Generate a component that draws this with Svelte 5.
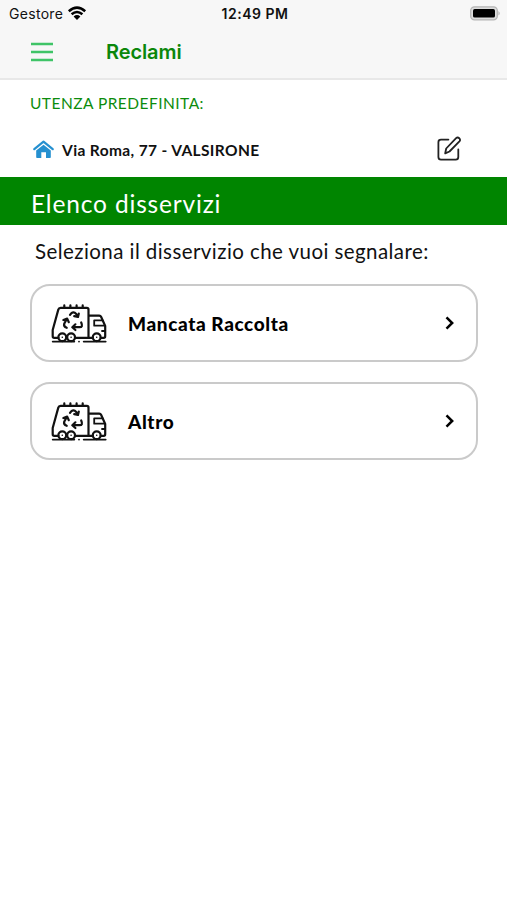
<script>
    const services = [
        { id: 1, label: 'Mancata Raccolta' },
        { id: 2, label: 'Altro' }
    ];
</script>

<div class="page">
    <header>
        <div class="status">
            <div class="carrier">
                <span>Gestore</span>
                <svg width="20" height="15" viewBox="0 0 20 15">
                    <path d="M1.8 5.2Q10-2 18.2 5.2M4.6 8.3Q10 3.6 15.4 8.3" fill="none" stroke="#000" stroke-width="2.5" />
                    <path d="M6.6 10.5Q10 7.6 13.4 10.5L10 14Z" />
                </svg>
            </div>
            <span class="time">12:49 PM</span>
            <svg class="battery" width="31" height="15" viewBox="0 0 31 15">
                <rect x="0.7" y="0.8" width="26.6" height="13" rx="3.8" fill="#ddd" stroke="#b5b5b5" stroke-width="1.3" />
                <rect x="3" y="3" width="22" height="8.6" rx="1.7" />
                <path d="M28.5 5Q30.8 7.3 28.5 9.6Z" fill="#aaa" />
            </svg>
        </div>
        <div class="nav">
            <svg class="menu" width="22" height="20" viewBox="0 0 22 20">
                <path d="M0 2H22M0 10H22M0 18H22" stroke="#3fc467" stroke-width="2.4" />
            </svg>
            <span class="title">Reclami</span>
        </div>
    </header>

    <div class="user-label"><span>UTENZA PREDEFINITA:</span></div>
    <div class="address">
        <svg width="21" height="19" viewBox="0 0 21 19">
            <path d="M1.3 9.2L10.5 1.7L19.7 9.2" fill="none" stroke="#2590d0" stroke-width="2.2" stroke-linecap="round" stroke-linejoin="round" />
            <path d="M3.2 10.6L10.5 4.8L17.8 10.6V17.3Q17.8 18 17 18H13V12.3H8.3V18H4Q3.2 18 3.2 17.3Z" fill="#2590d0" />
        </svg>
        <span class="street">Via Roma, 77 - VALSIRONE</span>
        <svg class="edit" width="26" height="26" viewBox="0 0 26 26" fill="none" stroke="#222" stroke-width="1.8" stroke-linecap="round" stroke-linejoin="round">
            <path d="M12.4 3.6H5Q2.4 3.6 2.4 6.2V21Q2.4 23.7 5 23.7H19.7Q22.3 23.7 22.3 21V13.4" />
            <path d="M9.2 17.3L10.2 12.5L20.1 2.2Q21.6.8 23.2 2.2Q24.8 3.8 23.4 5.4L13.5 15.5Z" />
        </svg>
    </div>

    <div class="banner"><span>Elenco disservizi</span></div>
    <div class="hint"><span>Seleziona il disservizio che vuoi segnalare:</span></div>

    <div class="list">
        {#each services as service (service.id)}
            <div class="card">
                <svg class="truck" width="56" height="41" viewBox="0 0 56 41" fill="none" stroke="#111" stroke-width="2.2" stroke-linecap="round" stroke-linejoin="round">
                    <path d="M7.4 34.8H3.2Q1.7 34.8 1.7 33.3V27L7.3 6.6Q7.8 4.8 9.6 4.8H35.8Q37.5 4.8 37.5 6.5V34.8M24 34.8H41.7M37.5 12.7H48.2Q49.6 12.7 50.2 14L54.2 23V33.3Q54.2 34.8 52.7 34.8H49.8" />
                    <path d="M13.3 4.5V2.4M19.4 4.5V2.4M25.6 4.5V2.4M31.7 4.5V2.4" />
                    <path d="M51.7 17.3H43.2V22.7H53.8M54 28H51" stroke-width="1.8" />
                    <circle cx="11.3" cy="34.3" r="3.9" />
                    <circle cx="20.1" cy="34.3" r="3.9" />
                    <circle cx="45.7" cy="34.3" r="3.9" />
                    <path d="M11.3 34.3h.01M20.1 34.3h.01M45.7 34.3h.01" stroke-width="1.6" />
                    <path d="M1.7 38.6H23.3M28 38.6h.01M32.7 38.6H54.7" stroke-width="1.8" />
                    <path d="M19 11.8Q22.2 7.3 25.2 11L26.7 13.6M27.8 10.6L27 14L23.2 13.2M15.7 24.8Q12.4 23.7 13.2 20.8L15.8 16M12.4 17L16.2 15.6L17.8 19.2M30.2 19.5Q32.4 24.2 28.5 24.2H21.5M24.4 21.3L21.3 24.2L24.4 27" />
                </svg>
                <span class="label">{service.label}</span>
                <svg class="chevron" width="10" height="14" viewBox="0 0 10 14">
                    <path d="M1.5 1.3L7.2 7L1.5 12.7" fill="none" stroke="#000" stroke-width="2.5" />
                </svg>
            </div>
        {/each}
    </div>
</div>

<style>
    :global(body) {
        background: #fff;
    }

    .page {
        min-height: 900px;
        font-family: 'Lato', sans-serif;
        color: #111;
        white-space: nowrap;
    }

    svg {
        display: block;
        flex: none;
    }

    header {
        box-sizing: border-box;
        height: 80px;
        background: #f7f7f7;
        border-bottom: 2px solid #e8e8e8;
        font-family: 'Inter', sans-serif;
    }

    .status {
        display: grid;
        grid-template-columns: 1fr auto 1fr;
        align-items: center;
        height: 27px;
        padding: 0 6px 0 9px;
        font-size: 14px;
    }

    .carrier {
        display: flex;
        align-items: center;
        gap: 4px;
        letter-spacing: 0.3px;
    }

    .time {
        font-weight: 600;
        letter-spacing: 0.5px;
    }

    .battery {
        justify-self: end;
    }

    .nav {
        display: flex;
        align-items: center;
        height: 49px;
        padding-left: 31px;
    }

    .title {
        margin-left: 53px;
        color: #0b870b;
        font-size: 20px;
        font-weight: 600;
        letter-spacing: -0.1px;
    }

    .user-label {
        height: 44px;
        padding-left: 30px;
        line-height: 47px;
        color: #0c8c0c;
        font-size: 15.5px;
        letter-spacing: 0.47px;
    }

    .address {
        display: flex;
        align-items: center;
        height: 50px;
        padding: 0 45px 3px 33px;
    }

    .street {
        margin-left: 8px;
        padding-top: 1px;
        font-size: 15.5px;
        font-weight: 700;
        letter-spacing: 0.37px;
    }

    .edit {
        margin-left: auto;
    }

    .banner {
        height: 48px;
        padding-left: 31px;
        background: #008500;
        color: #fff;
        font-size: 24.5px;
        line-height: 53px;
        letter-spacing: 0.83px;
    }

    .hint {
        height: 59px;
        padding-left: 35px;
        font-size: 20.5px;
        line-height: 53px;
        letter-spacing: 0.43px;
    }

    .list {
        display: flex;
        flex-direction: column;
        gap: 20px;
        padding: 0 29px 0 30px;
    }

    .card {
        box-sizing: border-box;
        display: flex;
        align-items: center;
        height: 78px;
        padding: 0 21px 0 19px;
        border: 2px solid #cacaca;
        border-radius: 20px;
    }

    .label {
        margin-left: 21px;
        padding-top: 1px;
        color: #000;
        font-size: 19px;
        font-weight: 900;
        letter-spacing: 0.6px;
    }

    .chevron {
        margin-left: auto;
    }
</style>
